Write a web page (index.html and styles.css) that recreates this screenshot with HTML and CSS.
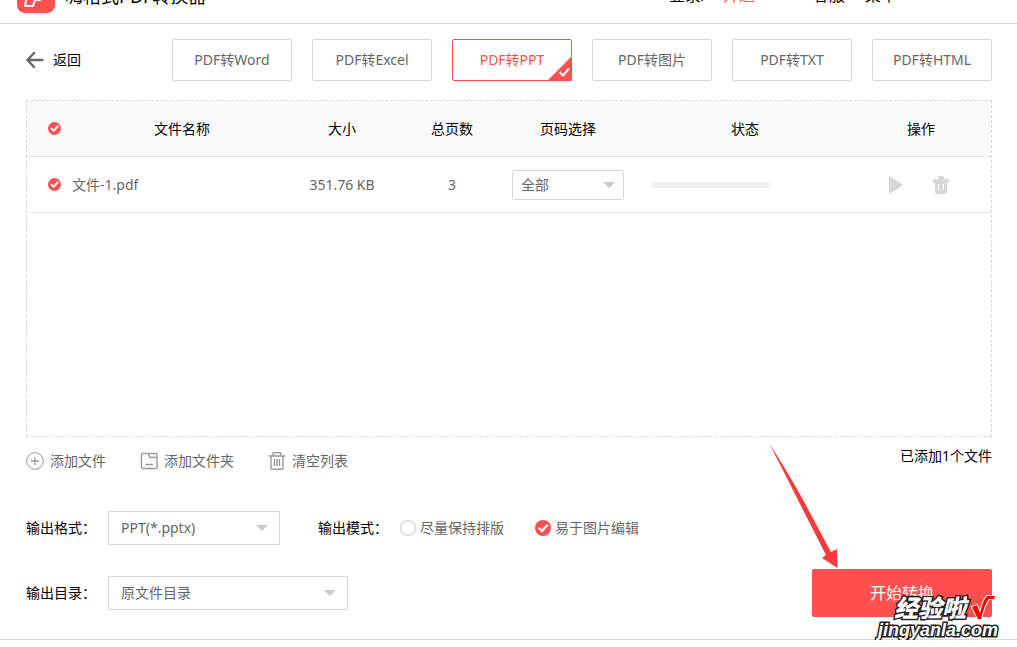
FILE: index.html
```
<!DOCTYPE html>
<html lang="zh-CN">
<head>
<meta charset="utf-8">
<title>嗨格式PDF转换器</title>
<link rel="stylesheet" href="styles.css">
</head>
<body>
<div class="window">
  <header class="titlebar">
    <svg class="logo" width="38" height="38" viewBox="0 0 38 38" aria-hidden="true">
      <rect width="38" height="38" rx="8" fill="#ff5050"/>
      <path d="M12 8h12q8 0 7 8t-9 9h-4l-2 6H8z" fill="none" stroke="#fff" stroke-width="2" stroke-linejoin="round"/>
    </svg>
    <h1 class="title">嗨格式PDF转换器</h1>
    <nav class="links">
      <a class="link" href="#">登录/</a>
      <a class="link link-vip" href="#">开通</a>
      <a class="link link-service" href="#">客服</a>
      <a class="link link-menu" href="#">菜单</a>
    </nav>
  </header>

  <main class="content">
    <div class="top">
      <button class="back" type="button">
        <svg width="19" height="18" viewBox="0 0 19 18" fill="none" stroke="#666" stroke-width="2.4" stroke-linecap="round" stroke-linejoin="round" aria-hidden="true"><path d="M8 2 1.500 9 8 16M1.500 9h15"/></svg>
        <span>返回</span>
      </button>
      <div class="tabs">
        <button class="tab" type="button">PDF转Word</button>
        <button class="tab" type="button">PDF转Excel</button>
        <button class="tab tab-active" type="button">PDF转PPT
          <svg class="corner" width="25" height="25" viewBox="0 0 25 25" aria-hidden="true"><path d="M25 0v25H0z" fill="#ff5050"/><path d="m12.500 16 3.500 3.500 6-7" fill="none" stroke="#fff" stroke-width="2"/></svg>
        </button>
        <button class="tab" type="button">PDF转图片</button>
        <button class="tab" type="button">PDF转TXT</button>
        <button class="tab" type="button">PDF转HTML</button>
      </div>
    </div>

    <section class="panel">
      <table class="files">
        <colgroup>
          <col class="c-check"><col class="c-name"><col class="c-size"><col class="c-pages"><col class="c-range"><col class="c-state"><col class="c-ops">
        </colgroup>
        <thead>
          <tr>
            <th class="check-cell"><input class="tick" type="checkbox" checked aria-label="全选"></th>
            <th>文件名称</th><th>大小</th><th>总页数</th><th>页码选择</th><th>状态</th><th class="ops-cell">操作</th>
          </tr>
        </thead>
        <tbody>
          <tr>
            <td class="check-cell"><input class="tick" id="file1" type="checkbox" checked></td>
            <td class="name-cell"><label for="file1">文件-1.pdf</label></td>
            <td>351.76 KB</td>
            <td>3</td>
            <td>
              <div class="pick pick-small"><select aria-label="页码选择"><option>全部</option></select></div>
            </td>
            <td class="state-cell"><div class="bar"></div></td>
            <td class="ops-cell">
              <div class="ops">
                <button class="icon" type="button" aria-label="开始"><svg width="14" height="18" viewBox="0 0 14 18"><path d="M0 0h1l13 9-13 9H0z" fill="#d8d8d8"/></svg></button>
                <button class="icon" type="button" aria-label="删除"><svg width="16" height="18" viewBox="0 0 16 18"><path fill="#d8d8d8" fill-rule="evenodd" d="M5 3V1q0-1 1-1h4q1 0 1 1v2h4q1 0 1 1v2q0 1-1 1h-1v9q0 2-2 2H4q-2 0-2-2V7H1Q0 7 0 6V4q0-1 1-1zM5 8v6h1V8zM10 8v6h1V8z"/></svg></button>
              </div>
            </td>
          </tr>
        </tbody>
      </table>
    </section>

    <div class="toolbar">
      <button class="tool" type="button">
        <svg width="18" height="18" viewBox="0 0 18 18" fill="none" stroke="#999"><circle cx="9" cy="9" r="8.300"/><path d="M5 9h8M9 5v8" stroke-width="1.300"/></svg>
        <span>添加文件</span>
      </button>
      <button class="tool" type="button">
        <svg width="18" height="18" viewBox="0 0 18 18" fill="none" stroke="#999" stroke-width="1.400"><path d="M1.500 2.700q0-1.200 1.200-1.200H8l2 4h6q1 0 1 1v8.800q0 1.200-1.200 1.200H2.700q-1.200 0-1.200-1.200zM9 1.500h6.500q1.500 0 1.500 1.500v4M5.500 12.500H13"/></svg>
        <span>添加文件夹</span>
      </button>
      <button class="tool" type="button">
        <svg width="18" height="18" viewBox="0 0 18 18" fill="none" stroke="#999" stroke-width="1.400"><path d="M.5 4h17M5 4V1.700Q5 .7 6 .7h6q1 0 1 1V4M3 4v12q0 1.300 1.300 1.300h9.400q1.300 0 1.300-1.300V4M6.500 7v7M9 7v7M11.500 7v7"/></svg>
        <span>清空列表</span>
      </button>
      <span class="count">已添加1个文件</span>
    </div>

    <form class="footer">
      <div class="settings">
        <div class="row">
          <label class="name" for="format">输出格式：</label>
          <div class="pick pick-format"><select id="format"><option>PPT(*.pptx)</option></select></div>
          <fieldset class="modes">
            <legend class="name">输出模式：</legend>
            <label class="mode"><input class="tick tick-big" type="radio" name="mode"><span>尽量保持排版</span></label>
            <label class="mode"><input class="tick tick-big" type="radio" name="mode" checked><span>易于图片编辑</span></label>
          </fieldset>
        </div>
        <div class="row">
          <label class="name" for="folder">输出目录：</label>
          <div class="pick pick-folder"><select id="folder"><option>原文件目录</option></select></div>
        </div>
      </div>
      <div class="action">
        <button class="start" type="button">开始转换</button>
        <svg class="pointer" width="70" height="126" viewBox="0 0 70 126" aria-hidden="true"><path d="M0 0Q15 23 32 53L62 109l6-3 .5 19L53 115l4-3L31 61Q14 27 0 0z" fill="#fb3a3a"/></svg>
        <div class="mark">
          <div class="mark-top"><span>经验啦</span>
            <svg width="26" height="26" viewBox="0 0 26 26" aria-hidden="true"><path d="m2 12 5-2 3 8Q13 5 17 1h8l-1 3h-5q-4 4-8 20H8z" fill="#f00" stroke="#fff" stroke-width="2" paint-order="stroke"/></svg>
          </div>
          <div class="mark-site">jingyanla.com</div>
        </div>
      </div>
    </form>
  </main>
</div>
</body>
</html>
```
FILE: styles.css
```
* { box-sizing: border-box; }

body {
  margin: 0;
  background: #fff;
  color: #000;
  font: 14px/20px "Noto Sans", "Noto Sans CJK SC", sans-serif;
}

button, select, input {
  margin: 0;
  font: inherit;
}

button {
  padding: 0;
  border: 0;
  background: none;
  color: inherit;
}

svg { display: block; flex: none; }

.window {
  display: flex;
  flex-direction: column;
  height: calc(100vh - 7px);
  min-height: 500px;
  border-bottom: 1px solid #d8d8d8;
}

.titlebar {
  display: flex;
  align-items: flex-end;
  flex: none;
  height: 24px;
  padding: 0 120px 10px 17px;
  border-bottom: 1px solid #d8d8d8;
  overflow: hidden;
}

.title {
  margin: 0 auto 5px 10px;
  font-size: 18px;
  line-height: 24px;
  font-weight: 400;
}

.links { display: flex; margin-bottom: 6px; }

.link {
  color: #000;
  font-size: 16px;
  line-height: 24px;
  text-decoration: none;
}

.link-vip { margin-left: 16px; color: #ff5050; }
.link-service { margin-left: 58px; }
.link-menu { margin-left: 20px; }

.content {
  display: flex;
  flex-direction: column;
  flex: 1;
  padding: 15px 25px 22px 26px;
}

.top {
  display: flex;
  justify-content: space-between;
}

.back {
  display: flex;
  align-items: center;
  gap: 8px;
}

.tabs { display: flex; gap: 20px; }

.tab {
  position: relative;
  width: 120px;
  height: 42px;
  border: 1px solid #d8d8d8;
  border-radius: 2px;
  color: #666;
}

.tab-active { border-color: #ff5050; color: #ff5050; }

.corner { position: absolute; right: -1px; bottom: -1px; }

.panel {
  flex: 1;
  margin-top: 19px;
  border: 1px dashed #d8d8d8;
}

.files {
  width: 100%;
  table-layout: fixed;
  border-collapse: separate;
  border-spacing: 0;
}

.c-check { width: 45px; }
.c-name { width: 220px; }
.c-size { width: 100px; }
.c-pages { width: 120px; }
.c-range { width: 112px; }
.c-ops { width: 125px; }

.files th, .files td {
  height: 56px;
  padding: 0;
  border-bottom: 1px solid #e6e6e6;
  text-align: center;
  font-weight: 400;
}

.files th { background: #fafafa; }
.files td { color: #666; }

.files .check-cell { padding-left: 21px; text-align: left; }
.files .name-cell { text-align: left; }
.files .ops-cell { padding-right: 15px; }
.files td.ops-cell { padding-right: 20px; }
.files .state-cell { padding-left: 27px; }

.bar {
  width: 120px;
  height: 6px;
  border-radius: 3px;
  background: #f0f0f0;
}

.ops {
  display: flex;
  justify-content: center;
  gap: 30px;
}

.tick {
  appearance: none;
  display: block;
  position: relative;
  flex: none;
  width: 13px;
  height: 13px;
  border: 1px solid #ccc;
  border-radius: 50%;
}

.tick-big { width: 16px; height: 16px; }

.tick:checked { border: 0; background: #ff5050; }

.tick:checked::after {
  content: "";
  position: absolute;
  inset: 0;
  background: #fff;
  clip-path: polygon(18% 52%, 28% 43%, 43% 58%, 75% 24%, 84% 34%, 44% 79%);
}

.pick { position: relative; color: #666; }

.pick::after {
  content: "";
  position: absolute;
  right: 12px;
  top: 50%;
  margin-top: -3px;
  border: 6px solid transparent;
  border-top-color: #ccc;
  border-bottom: 0;
  pointer-events: none;
}

.pick select {
  appearance: none;
  display: block;
  width: 100%;
  height: 34px;
  padding: 0 28px 0 12px;
  border: 1px solid #d8d8d8;
  border-radius: 0;
  background: #fff;
  color: #666;
}

.pick-small select {
  height: 30px;
  padding-left: 8px;
  border-radius: 2px;
}

.pick-small::after { right: 9px; }
.pick-format { width: 172px; }
.pick-folder { width: 240px; }

.toolbar {
  display: flex;
  align-items: flex-start;
  gap: 34px;
  padding-top: 14px;
}

.tool {
  display: flex;
  align-items: center;
  gap: 6px;
  color: #666;
}

.count { margin: -5px 0 0 auto; }

.footer {
  display: flex;
  align-items: flex-end;
  justify-content: space-between;
  margin-top: 40px;
}

.settings {
  display: grid;
  gap: 31px;
  padding-bottom: 7px;
}

.row { display: flex; align-items: center; }

.name {
  flex: none;
  float: left;
  width: 82px;
  padding: 0;
}

.modes {
  display: flex;
  align-items: center;
  margin: 0 0 0 38px;
  padding: 0;
  border: 0;
}

.mode {
  display: flex;
  align-items: center;
  gap: 4px;
  margin-right: 31px;
  color: #666;
}

.action { position: relative; flex: none; }

.start {
  width: 180px;
  height: 48px;
  border-radius: 2px;
  background: #ff5050;
  color: #fff;
  font-size: 16px;
}

.pointer { position: absolute; left: -43px; top: -126px; }

.mark {
  position: absolute;
  left: 66px;
  top: 26px;
  color: #fff;
  font-weight: 900;
  -webkit-text-stroke: 3px #222;
  paint-order: stroke fill;
  pointer-events: none;
}

.mark-top {
  display: flex;
  align-items: center;
  gap: 4px;
  padding-left: 16px;
  font-size: 24px;
  line-height: 26px;
  font-style: italic;
}

.mark-site {
  font: italic 700 18px/18px "Liberation Sans", sans-serif;
}
```
